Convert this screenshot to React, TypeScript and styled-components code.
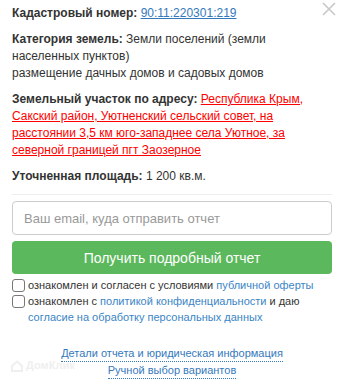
import styled, { createGlobalStyle } from "styled-components";

const GlobalStyle = createGlobalStyle`
    html, body {
        margin: 0;
        padding: 0;
        background: #fff;
    }
    body {
        font-family: "Liberation Sans", Arial, sans-serif;
        color: #333;
    }
`

const Popup = styled.div`
    position: relative;
    width: 345px;
    height: 383px;
    box-sizing: border-box;
    padding: 5px 13px 0 12px;
    font-size: 12px;
    line-height: 17px;
    overflow: hidden;
`

const Close = styled.div`
    position: absolute;
    top: 2px;
    right: 9px;
    width: 14px;
    height: 14px;
    color: #c8c8c8;
`

const Info = styled.p`
    margin: 0 0 9px 0;
`

const Label = styled.b`
    font-weight: bold;
`

const LinkBlue = styled.a`
    color: #3579bd;
    text-decoration: underline;
`

const LinkRed = styled.a`
    color: #ff0000;
    text-decoration: underline;
`

const Divider = styled.hr`
    border: 0;
    border-top: 1px solid #eee;
    margin: 8px 0 6px 0;
`

const Form = styled.div`
    display: flex;
    flex-direction: column;
    gap: 6px;
`

const EmailInput = styled.input`
    box-sizing: border-box;
    width: 100%;
    height: 34px;
    padding: 0 11px;
    border: 1px solid #ccc;
    border-radius: 4px;
    font-family: "Liberation Sans", Arial, sans-serif;
    font-size: 13px;
    color: #555;
    outline: none;
    &::placeholder {
        color: #999;
    }
`

const SubmitButton = styled.button`
    height: 33px;
    width: 100%;
    border: 0;
    border-radius: 4px;
    background: #5cb85c;
    color: #fff;
    font-family: "Liberation Sans", Arial, sans-serif;
    font-size: 14px;
    cursor: pointer;
`

const Agreements = styled.div`
    display: flex;
    flex-direction: column;
    margin-top: 3px;
    font-size: 11px;
    line-height: 16px;
`

const CheckRow = styled.label`
    display: flex;
    align-items: flex-start;
    gap: 3px;
`

const Box = styled.span`
    flex: none;
    width: 11px;
    height: 11px;
    margin-top: 2px;
    border: 1px solid #777;
    border-radius: 3px;
    background: #fff;
`

const SoftLink = styled.a`
    color: #3a85c6;
    text-decoration: none;
`

const Footer = styled.div`
    display: flex;
    flex-direction: column;
    align-items: center;
    gap: 1px;
    margin-top: 21px;
    font-size: 11px;
    line-height: 15px;
`

const DottedLink = styled.a`
    color: #3579bd;
    text-decoration: none;
    border-bottom: 1px dotted #3579bd;
`

const Watermark = styled.div`
    position: absolute;
    left: 11px;
    bottom: 9px;
    display: flex;
    align-items: center;
    gap: 3px;
    color: #efefef;
    font-size: 11px;
    font-weight: bold;
`

const App = () => {
    return (
        <>
            <GlobalStyle />
            <Popup>
                <Close>
                    <svg width="14" height="14" viewBox="0 0 14 14">
                        <path d="M1 1 L13 13 M13 1 L1 13" stroke="currentColor" strokeWidth="1.6" />
                    </svg>
                </Close>
                <Info>
                    <Label>Кадастровый номер:</Label> <LinkBlue href="#">90:11:220301:219</LinkBlue>
                </Info>
                <Info>
                    <Label>Категория земель:</Label> Земли поселений (земли
                    <br />
                    населенных пунктов)
                    <br />
                    размещение дачных домов и садовых домов
                </Info>
                <Info>
                    <Label>Земельный участок по адресу:</Label>{" "}
                    <LinkRed href="#">
                        Республика Крым, Сакский район, Уютненский сельский совет, на расстоянии 3,5 км юго-западнее села Уютное, за северной границей пгт Заозерное
                    </LinkRed>
                </Info>
                <Info>
                    <Label>Уточненная площадь:</Label> 1 200 кв.м.
                </Info>
                <Divider />
                <Form>
                    <EmailInput placeholder="Ваш email, куда отправить отчет" />
                    <SubmitButton>Получить подробный отчет</SubmitButton>
                </Form>
                <Agreements>
                    <CheckRow>
                        <Box />
                        <span>
                            ознакомлен и согласен с условиями <SoftLink href="#">публичной оферты</SoftLink>
                        </span>
                    </CheckRow>
                    <CheckRow>
                        <Box />
                        <span>
                            ознакомлен с <SoftLink href="#">политикой конфиденциальности</SoftLink> и даю
                            <br />
                            <SoftLink href="#">согласие на обработку персональных данных</SoftLink>
                        </span>
                    </CheckRow>
                </Agreements>
                <Footer>
                    <DottedLink href="#">Детали отчета и юридическая информация</DottedLink>
                    <DottedLink href="#">Ручной выбор вариантов</DottedLink>
                </Footer>
                <Watermark>
                    <svg width="12" height="12" viewBox="0 0 12 12">
                        <path d="M1 6 L6 1.5 L11 6 L11 11 L1 11 Z" fill="none" stroke="currentColor" strokeWidth="2" />
                    </svg>
                    ДомКлик
                </Watermark>
            </Popup>
        </>
    );
}

export default App;
